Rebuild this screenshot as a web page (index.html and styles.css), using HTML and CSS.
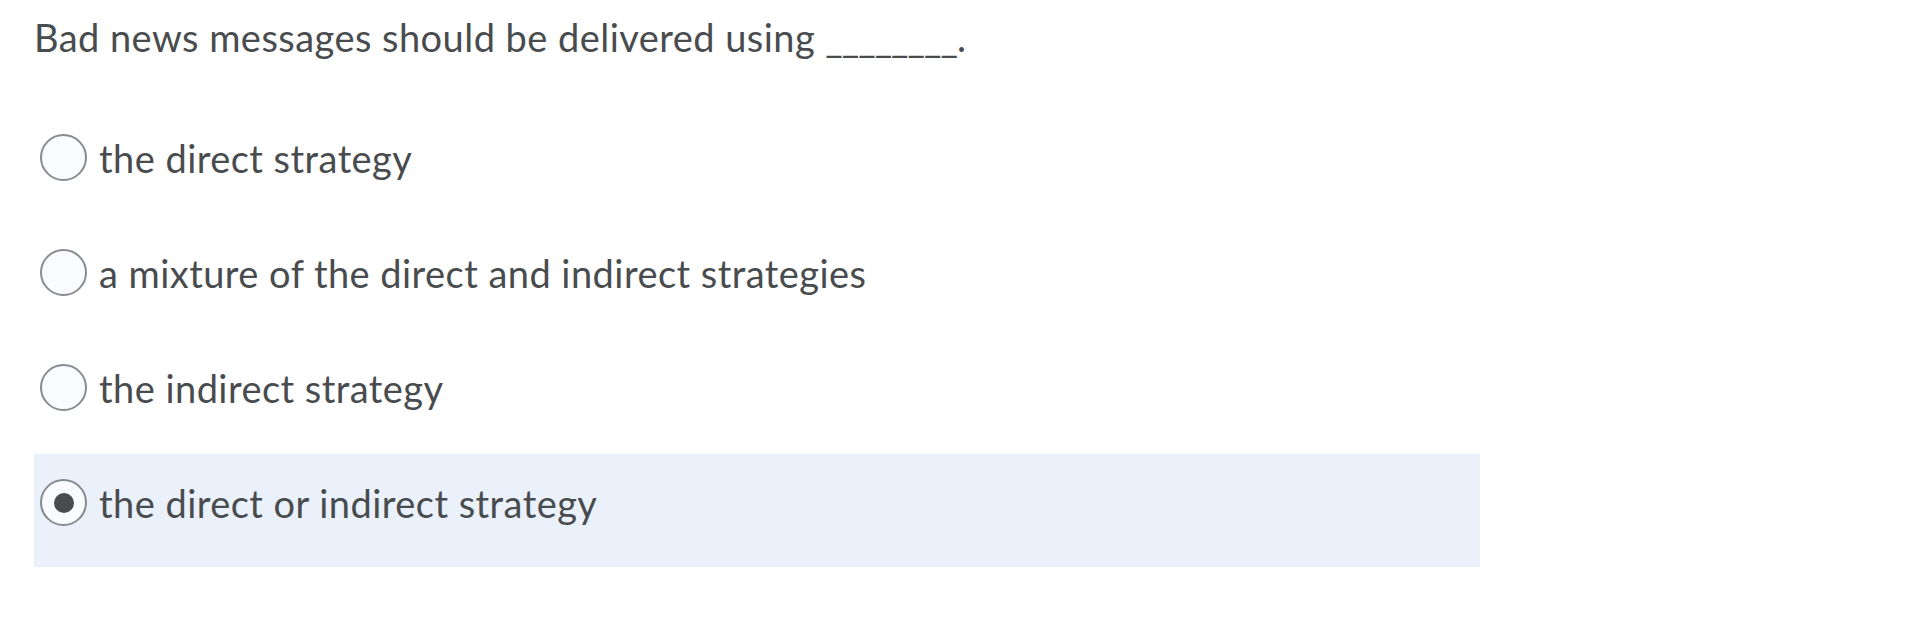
FILE: index.html
```html
<!DOCTYPE html>
<html lang="en">
<head>
<meta charset="utf-8">
<title>Quiz question</title>
<link rel="stylesheet" href="styles.css">
</head>
<body>
<div class="quiz">
  <p class="question">Bad news messages should be delivered using <span class="blank">________</span>.</p>
  <div class="options">
    <label class="option">
      <span class="radio"></span>
      <span class="label">the direct strategy</span>
    </label>
    <label class="option">
      <span class="radio"></span>
      <span class="label">a mixture of the direct and indirect strategies</span>
    </label>
    <label class="option">
      <span class="radio"></span>
      <span class="label">the indirect strategy</span>
    </label>
    <label class="option selected">
      <span class="radio checked"></span>
      <span class="label">the direct or indirect strategy</span>
    </label>
  </div>
</div>
</body>
</html>
```

FILE: styles.css
```css
html, body {
  margin: 0;
  padding: 0;
  background: #ffffff;
}

body {
  font-family: Lato, "Open Sans", sans-serif;
  color: #494c4e;
}

.quiz {
  padding: 11px 0 0 34px;
  width: 1446px;
}

.question {
  margin: 0;
  font-size: 38px;
  letter-spacing: 0.45px;
  line-height: 52px;
}

.blank {
  letter-spacing: -1px;
}

.options {
  margin-top: 46px;
  display: flex;
  flex-direction: column;
  gap: 2px;
}

.option {
  display: flex;
  align-items: center;
  gap: 12px;
  height: 113px;
  box-sizing: border-box;
  padding: 0 0 16px 6px;
  font-size: 38px;
  letter-spacing: 0.45px;
  line-height: 52px;
}

.option.selected {
  background: #eaf1fb;
}

.radio {
  flex: none;
  width: 47px;
  height: 47px;
  box-sizing: border-box;
  border: 2px solid #868c8f;
  border-radius: 50%;
  background: #f9fbff;
  display: flex;
  align-items: center;
  justify-content: center;
}

.radio.checked::after {
  content: "";
  width: 20px;
  height: 20px;
  border-radius: 50%;
  background: #494c4e;
}
```
